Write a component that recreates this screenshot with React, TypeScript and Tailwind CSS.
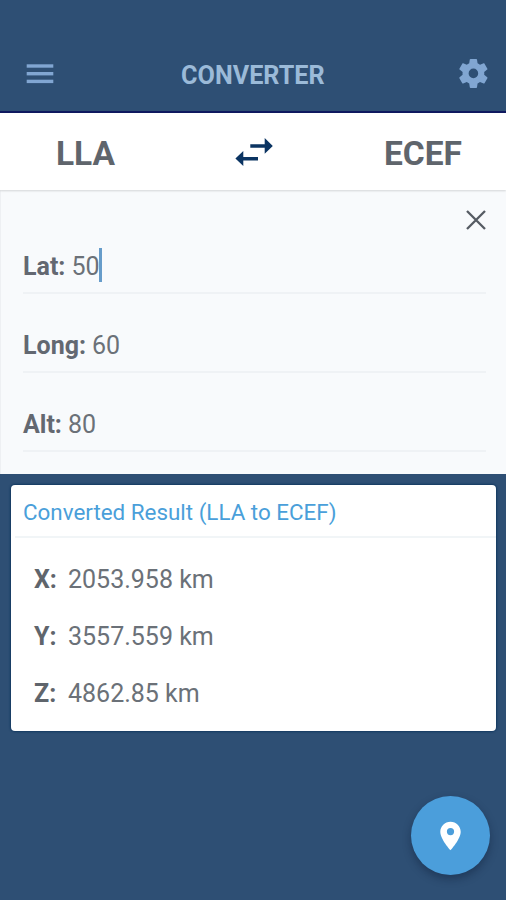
const fields = [
  { label: 'Lat:', value: '50', focused: true },
  { label: 'Long:', value: '60', focused: false },
  { label: 'Alt:', value: '80', focused: false },
];

const results = [
  { axis: 'X:', value: '2053.958 km' },
  { axis: 'Y:', value: '3557.559 km' },
  { axis: 'Z:', value: '4862.85 km' },
];

function MenuIcon() {
  return (
    <svg width="28" height="20" viewBox="0 0 28 20" fill="#81a6d2">
      <rect x="0.7" y="0.3" width="26.6" height="3.4" />
      <rect x="0.7" y="8" width="26.6" height="3.4" />
      <rect x="0.7" y="15.7" width="26.6" height="3.4" />
    </svg>
  );
}

function GearIcon() {
  return (
    <svg width="34.8" height="34.8" viewBox="0 0 24 24" fill="#81a6d2">
      <path d="M19.43 12.98c.04-.32.07-.64.07-.98s-.03-.66-.07-.98l2.11-1.65c.19-.15.24-.42.12-.64l-2-3.46c-.12-.22-.39-.3-.61-.22l-2.49 1c-.52-.4-1.08-.73-1.69-.98l-.38-2.65C14.46 2.18 14.25 2 14 2h-4c-.25 0-.46.18-.49.42l-.38 2.65c-.61.25-1.17.59-1.69.98l-2.49-1c-.23-.09-.49 0-.61.22l-2 3.46c-.13.22-.07.49.12.64l2.11 1.65c-.04.32-.07.65-.07.98s.03.66.07.98l-2.11 1.65c-.19.15-.24.42-.12.64l2 3.46c.12.22.39.3.61.22l2.49-1c.52.4 1.08.73 1.69.98l.38 2.65c.03.24.24.42.49.42h4c.25 0 .46-.18.49-.42l.38-2.65c.61-.25 1.17-.59 1.69-.98l2.49 1c.23.09.49 0 .61-.22l2-3.46c.12-.22.07-.49-.12-.64l-2.11-1.65zM12 15.3a3.300 3.300 0 1 1 0-6.600a3.300 3.300 0 0 1 0 6.600z" />
    </svg>
  );
}

function SwapIcon() {
  return (
    <svg width="38" height="30" viewBox="0 0 38 30" fill="#0b3462">
      <path d="M15.300 8.200h14.400V2L37.800 9.900l-8.100 7.800V11.700H15.300z" />
      <path d="M23 20.900H8.300v-5.800L0.400 22.600l7.900 7.300v-5.500H23z" />
    </svg>
  );
}

function CloseIcon() {
  return (
    <svg width="20" height="20" viewBox="0 0 20 20" stroke="#555b63" strokeWidth="2.3" fill="none">
      <path d="M1 1l18 18M19 1L1 19" />
    </svg>
  );
}

function PinIcon() {
  return (
    <svg width="21" height="30" viewBox="0 0 21 30">
      <path
        fill="#fff"
        fillRule="evenodd"
        d="M10.500 0.700C4.800 0.700 0.300 5.200 0.300 10.800 0.300 18.300 10.500 29.300 10.500 29.300S20.700 18.300 20.700 10.800C20.700 5.200 16.200 0.700 10.500 0.700zM10.500 7a3.600 3.600 0 1 1 0 7.200a3.600 3.600 0 0 1 0-7.200z"
      />
    </svg>
  );
}

export default function App() {
  return (
    <div className="flex h-[900px] w-[506px] flex-col overflow-hidden bg-[#2e4f74] font-['Roboto',sans-serif] text-[#5f656c]">
      <header className="flex h-[113px] shrink-0 items-end border-b-2 border-[#101a60] pr-[15.5px] pb-[17px] pl-[26px]">
        <div className="flex h-9 w-[34px] items-center pb-1">
          <MenuIcon />
        </div>
        <h1 className="flex-1 pr-1 text-center text-[25.2px] leading-9 font-bold text-[#9bbad8]">
          <span className="-ml-1.5">CONVERTER</span>
        </h1>
        <div className="flex h-9 items-center pb-[5px]">
          <GearIcon />
        </div>
      </header>

      <section className="z-10 flex h-[77px] shrink-0 items-center bg-white pt-1 pr-[44px] pl-[56px] shadow-[0_1px_2px_rgba(0,0,0,0.15)]">
        <span className="w-[179px] text-[33.5px] leading-10 font-bold">LLA</span>
        <div className="w-[38px] pb-[5px]">
          <SwapIcon />
        </div>
        <span className="flex-1 text-right text-[33.5px] leading-10 font-bold">ECEF</span>
      </section>

      <section className="flex h-[284px] shrink-0 flex-col border-l border-[#eef0f3] bg-[#f8fafc] pr-5 pl-[22px]">
        <div className="flex h-[25px] items-end justify-end">
          <div className="-mb-[15px]">
            <CloseIcon />
          </div>
        </div>
        {fields.map((field) => (
          <div key={field.label} className="flex h-[79px] items-end border-b-2 border-[#eff2f5] pb-2">
            <span className="text-[25px] leading-[34px] font-bold text-[#636871]">{field.label}</span>
            <span className="ml-1.5 text-[25px] leading-[34px] text-[#6b7178]">{field.value}</span>
            {field.focused && <span className="mb-0.5 -ml-px h-[34px] w-[3px] bg-[#679cca]" />}
          </div>
        ))}
      </section>

      <section className="mr-[10px] ml-[11px] mt-[10.5px] h-[246.5px] shrink-0 rounded-[4px] bg-white shadow-[0_0_2px_1px_#123961]">
        <h2 className="ml-1 h-[53.5px] border-b-2 border-[#f1f5f7] pl-2 text-[22.4px] leading-[55px] text-[#4a9fda]">
          Converted Result (LLA to ECEF)
        </h2>
        <div className="flex flex-col pt-[14px] pl-[23px]">
          {results.map((row) => (
            <div key={row.axis} className="flex h-[56.7px] items-center text-[25px] leading-8">
              <span className="w-[34px] font-bold">{row.axis}</span>
              <span className="text-[#6b7178]">{row.value}</span>
            </div>
          ))}
        </div>
      </section>

      <div className="mt-auto flex justify-end pr-4 pb-[25px]">
        <button className="flex size-[79px] items-center justify-center rounded-full bg-[#4b9edb] shadow-[0_4px_9px_rgba(10,25,50,0.4)]">
          <PinIcon />
        </button>
      </div>
    </div>
  );
}
